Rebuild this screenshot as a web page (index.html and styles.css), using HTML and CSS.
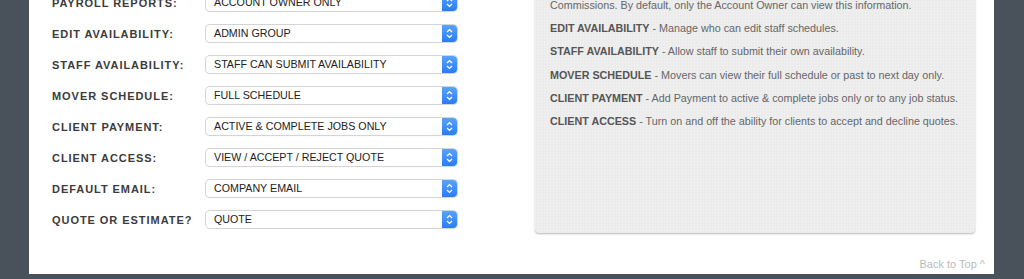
FILE: index.html
```html
<!DOCTYPE html>
<html>
<head>
<meta charset="utf-8">
<link rel="stylesheet" href="styles.css">
</head>
<body>
<div class="page">
  <div class="content">
    <div class="form">
      <div class="row"><span class="label">PAYROLL REPORTS:</span><div class="select"><span class="value">ACCOUNT OWNER ONLY</span><span class="btn"><svg width="15" height="17" viewBox="0 0 15 17"><path d="M5 7 L7.5 4.6 L10 7 M5 10 L7.5 12.4 L10 10" fill="none" stroke="#fff" stroke-width="1.3"/></svg></span></div></div>
      <div class="row"><span class="label">EDIT AVAILABILITY:</span><div class="select"><span class="value">ADMIN GROUP</span><span class="btn"><svg width="15" height="17" viewBox="0 0 15 17"><path d="M5 7 L7.5 4.6 L10 7 M5 10 L7.5 12.4 L10 10" fill="none" stroke="#fff" stroke-width="1.3"/></svg></span></div></div>
      <div class="row"><span class="label">STAFF AVAILABILITY:</span><div class="select"><span class="value">STAFF CAN SUBMIT AVAILABILITY</span><span class="btn"><svg width="15" height="17" viewBox="0 0 15 17"><path d="M5 7 L7.5 4.6 L10 7 M5 10 L7.5 12.4 L10 10" fill="none" stroke="#fff" stroke-width="1.3"/></svg></span></div></div>
      <div class="row"><span class="label">MOVER SCHEDULE:</span><div class="select"><span class="value">FULL SCHEDULE</span><span class="btn"><svg width="15" height="17" viewBox="0 0 15 17"><path d="M5 7 L7.5 4.6 L10 7 M5 10 L7.5 12.4 L10 10" fill="none" stroke="#fff" stroke-width="1.3"/></svg></span></div></div>
      <div class="row"><span class="label">CLIENT PAYMENT:</span><div class="select"><span class="value">ACTIVE &amp; COMPLETE JOBS ONLY</span><span class="btn"><svg width="15" height="17" viewBox="0 0 15 17"><path d="M5 7 L7.5 4.6 L10 7 M5 10 L7.5 12.4 L10 10" fill="none" stroke="#fff" stroke-width="1.3"/></svg></span></div></div>
      <div class="row"><span class="label">CLIENT ACCESS:</span><div class="select"><span class="value">VIEW / ACCEPT / REJECT QUOTE</span><span class="btn"><svg width="15" height="17" viewBox="0 0 15 17"><path d="M5 7 L7.5 4.6 L10 7 M5 10 L7.5 12.4 L10 10" fill="none" stroke="#fff" stroke-width="1.3"/></svg></span></div></div>
      <div class="row"><span class="label">DEFAULT EMAIL:</span><div class="select"><span class="value">COMPANY EMAIL</span><span class="btn"><svg width="15" height="17" viewBox="0 0 15 17"><path d="M5 7 L7.5 4.6 L10 7 M5 10 L7.5 12.4 L10 10" fill="none" stroke="#fff" stroke-width="1.3"/></svg></span></div></div>
      <div class="row"><span class="label">QUOTE OR ESTIMATE?</span><div class="select"><span class="value">QUOTE</span><span class="btn"><svg width="15" height="17" viewBox="0 0 15 17"><path d="M5 7 L7.5 4.6 L10 7 M5 10 L7.5 12.4 L10 10" fill="none" stroke="#fff" stroke-width="1.3"/></svg></span></div></div>
    </div>
    <div class="help">
      <p><b>PAYROLL REPORTS</b> - Manage who can view Payroll Reports, Pay Rates and<br>Commissions. By default, only the Account Owner can view this information.</p>
      <p><b>EDIT AVAILABILITY</b> - Manage who can edit staff schedules.</p>
      <p><b>STAFF AVAILABILITY</b> - Allow staff to submit their own availability.</p>
      <p><b>MOVER SCHEDULE</b> - Movers can view their full schedule or past to next day only.</p>
      <p><b>CLIENT PAYMENT</b> - Add Payment to active &amp; complete jobs only or to any job status.</p>
      <p><b>CLIENT ACCESS</b> - Turn on and off the ability for clients to accept and decline quotes.</p>
    </div>
  </div>
  <div class="footer"><a class="top-link" href="#">Back to Top ^</a></div>
</div>
</body>
</html>
```

FILE: styles.css
```css
html, body {
  margin: 0;
  padding: 0;
}
body {
  background: #49525a;
  font-family: "Liberation Sans", Arial, sans-serif;
  overflow: hidden;
  height: 279px;
}
.page {
  width: 965px;
  margin: 0 0 0 29px;
  background: #fff;
  padding: 0 19px 3px 0;
  box-sizing: border-box;
}
.content {
  display: flex;
  margin-top: -40px;
}
.form {
  flex: none;
  width: 506px;
  padding: 27px 0 0 23px;
  box-sizing: border-box;
}
.row {
  display: flex;
  align-items: center;
  height: 31px;
}
.label {
  width: 154px;
  font-size: 11px;
  font-weight: bold;
  letter-spacing: 0.95px;
  color: #3b3b3b;
  white-space: nowrap;
}
.select {
  display: flex;
  width: 251px;
  height: 17px;
  border-radius: 4px;
  background: #fff;
  box-shadow: 0 0 0 1px #d4d4d4, 0 1px 1px rgba(0,0,0,0.12);
  overflow: hidden;
}
.value {
  flex: 1;
  padding-left: 8px;
  font-size: 10.7px;
  line-height: 17px;
  color: #222;
  white-space: nowrap;
}
.btn {
  width: 15px;
  height: 17px;
  background: linear-gradient(#5aa3fb, #2a7cf6);
  display: flex;
}
.help {
  flex: 1;
  min-width: 0;
  overflow: hidden;
  margin-bottom: 2px;
  background-color: #ebebeb;
  background-image:
    linear-gradient(90deg, rgba(255,255,255,0.16) 1px, transparent 1px),
    linear-gradient(rgba(255,255,255,0.16) 1px, transparent 1px);
  background-size: 3px 3px;
  border-radius: 4px;
  box-shadow: 0 1px 2px rgba(0,0,0,0.28);
  padding: 24px 10px 0 15px;
  font-size: 10.75px;
  color: #666;
}
.help p {
  margin: 0 0 9.2px;
  line-height: 14px;
  white-space: nowrap;
}
.help b {
  color: #555;
}
.footer {
  display: flex;
  justify-content: flex-end;
  padding: 22px 0 0 0;
  margin-right: -10px;
}
.top-link {
  font-size: 11px;
  line-height: 14px;
  color: #bbb;
  text-decoration: none;
}
```
